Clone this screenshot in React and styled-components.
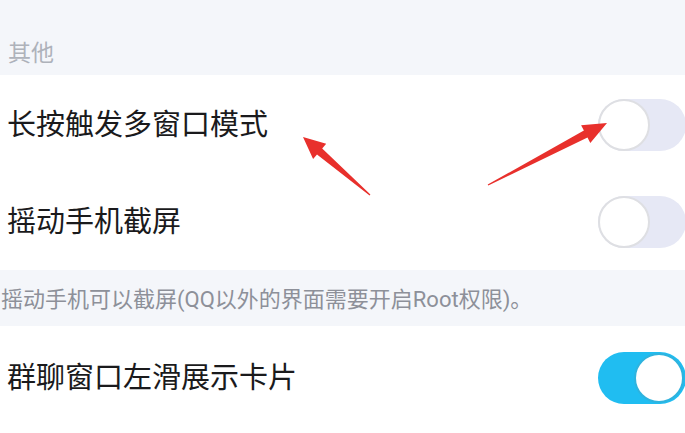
import React from "react";
import styled, { createGlobalStyle } from "styled-components";

const Global = createGlobalStyle`
  html, body { margin: 0; padding: 0; background: #ffffff; }
  body { font-family: Roboto, "Noto Sans CJK SC", sans-serif; overflow: hidden; }
`;

const Page = styled.div`
  position: relative;
  width: 685px;
  height: 433px;
  overflow: hidden;
  display: flex;
  flex-direction: column;
  background: #ffffff;
`;

const SectionHeader = styled.div`
  height: 75px;
  box-sizing: border-box;
  background: #f4f6fa;
  display: flex;
  align-items: flex-end;
  padding: 0 0 8px 8px;
  font-size: 23px;
  line-height: 26px;
  color: #aeb2ba;
`;

const Row = styled.div`
  height: ${(p) => p.$h || 98}px;
  box-sizing: border-box;
  background: #ffffff;
  display: flex;
  align-items: center;
  justify-content: space-between;
  padding: 0 0 0 7px;
  flex-shrink: 0;
`;

const Label = styled.span`
  font-size: 29px;
  line-height: 34px;
  color: #1a1a1c;
  padding-top: ${(p) => p.$pt || 0}px;
`;

const Note = styled.div`
  height: 56px;
  box-sizing: border-box;
  background: #f4f6fa;
  display: flex;
  align-items: center;
  padding: 0 0 2px 1px;
  font-size: 22px;
  color: #8d9099;
  white-space: nowrap;
`;

const Track = styled.div`
  width: 88px;
  height: 52px;
  border-radius: 26px;
  box-sizing: border-box;
  margin-right: -1px;
  background: ${(p) => (p.$on ? "#20bdf1" : "#e6e8f5")};
  display: flex;
  align-items: center;
  justify-content: ${(p) => (p.$on ? "flex-end" : "flex-start")};
  padding: ${(p) => (p.$on ? "0 2px 0 0" : "0")};
`;

const Knob = styled.div`
  width: ${(p) => (p.$on ? 50 : 52)}px;
  height: ${(p) => (p.$on ? 50 : 52)}px;
  border-radius: 50%;
  box-sizing: border-box;
  background: #ffffff;
  border: 2px solid ${(p) => (p.$on ? "#2fb3de" : "#dedfe3")};
`;

const Overlay = styled.svg`
  position: absolute;
  left: 0;
  top: 0;
  width: 685px;
  height: 433px;
  pointer-events: none;
`;

function Toggle({ on }) {
  return (
    <Track $on={on}>
      <Knob $on={on} />
    </Track>
  );
}

export default function App() {
  return (
    <>
      <Global />
      <Page>
        <SectionHeader>其他</SectionHeader>
        <Row $h={99}>
          <Label>长按触发多窗口模式</Label>
          <Toggle on={false} />
        </Row>
        <Row $h={96}>
          <Label>摇动手机截屏</Label>
          <Toggle on={false} />
        </Row>
        <Note>摇动手机可以截屏(QQ以外的界面需要开启Root权限)。</Note>
        <Row $h={103}>
          <Label $pt={1}>群聊窗口左滑展示卡片</Label>
          <Toggle on={true} />
        </Row>
        <Overlay viewBox="0 0 685 433">
          <polygon
            fill="#e8302c"
            points="303,137 326.2,143.8 322.2,148.4 370.4,194.6 369.6,195.4 317,154.4 313.1,159"
          />
          <polygon
            fill="#e8302c"
            points="607,123 590.3,143 587.5,137.6 488.3,185.5 487.7,184.5 583.9,130.6 581.1,125.2"
          />
        </Overlay>
      </Page>
    </>
  );
}
